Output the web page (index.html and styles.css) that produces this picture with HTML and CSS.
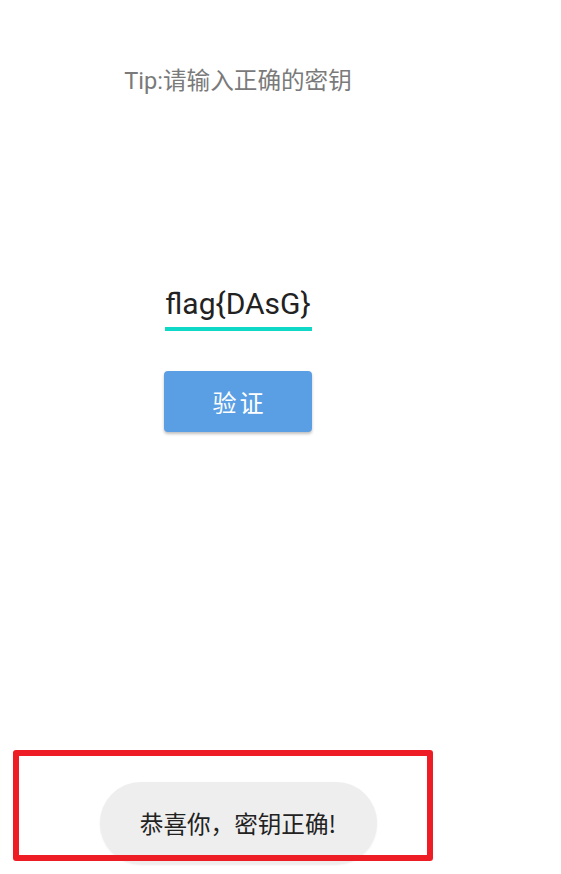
FILE: index.html
```html
<!DOCTYPE html>
<html lang="zh">
<head>
<meta charset="utf-8">
<link rel="stylesheet" href="styles.css">
</head>
<body>
<div class="app">
  <p class="tip">Tip:请输入正确的密钥</p>
  <div class="field">
    <span class="value">flag{DAsG}</span>
  </div>
  <button class="verify">验证</button>
  <div class="spacer"></div>
  <div class="toast">恭喜你，密钥正确!</div>
</div>
<div class="highlight"></div>
</body>
</html>
```

FILE: styles.css
```css
html, body {
  margin: 0;
  padding: 0;
  background: #ffffff;
}
body {
  width: 561px;
  height: 874px;
  overflow: hidden;
  position: relative;
  font-family: Roboto, "Noto Sans CJK SC", sans-serif;
}
.app {
  width: 476px;
  height: 874px;
  display: flex;
  flex-direction: column;
  align-items: center;
}
.tip {
  margin: 66px 0 0 0;
  font-size: 23.6px;
  line-height: 30px;
  color: #7a7a7a;
}
.field {
  margin-top: 190px;
  width: 147px;
  border-bottom: 4px solid #10d8c6;
  display: flex;
  justify-content: center;
  padding-bottom: 5px;
}
.value {
  font-size: 30px;
  line-height: 36px;
  color: #222222;
}
.verify {
  margin-top: 40px;
  width: 148px;
  height: 61px;
  border: none;
  border-radius: 4px;
  background: #5a9fe3;
  color: #ffffff;
  font-family: Roboto, "Noto Sans CJK SC", sans-serif;
  font-size: 24px;
  letter-spacing: 3px;
  padding: 0 0 0 3px;
  box-shadow: 0 2px 3px rgba(0,0,0,0.25);
}
.spacer {
  flex: 1;
}
.toast {
  margin-bottom: 10px;
  width: 277px;
  height: 82px;
  border-radius: 41px;
  background: #eeeeee;
  color: #222222;
  font-family: "Noto Sans CJK SC", sans-serif;
  font-size: 23.6px;
  display: flex;
  align-items: center;
  justify-content: center;
  box-shadow: 0 1px 2px rgba(0,0,0,0.08);
}
.highlight {
  position: absolute;
  left: 13px;
  top: 750px;
  width: 408px;
  height: 99px;
  border: 6px solid #ee1c25;
  border-radius: 3px;
}
```
